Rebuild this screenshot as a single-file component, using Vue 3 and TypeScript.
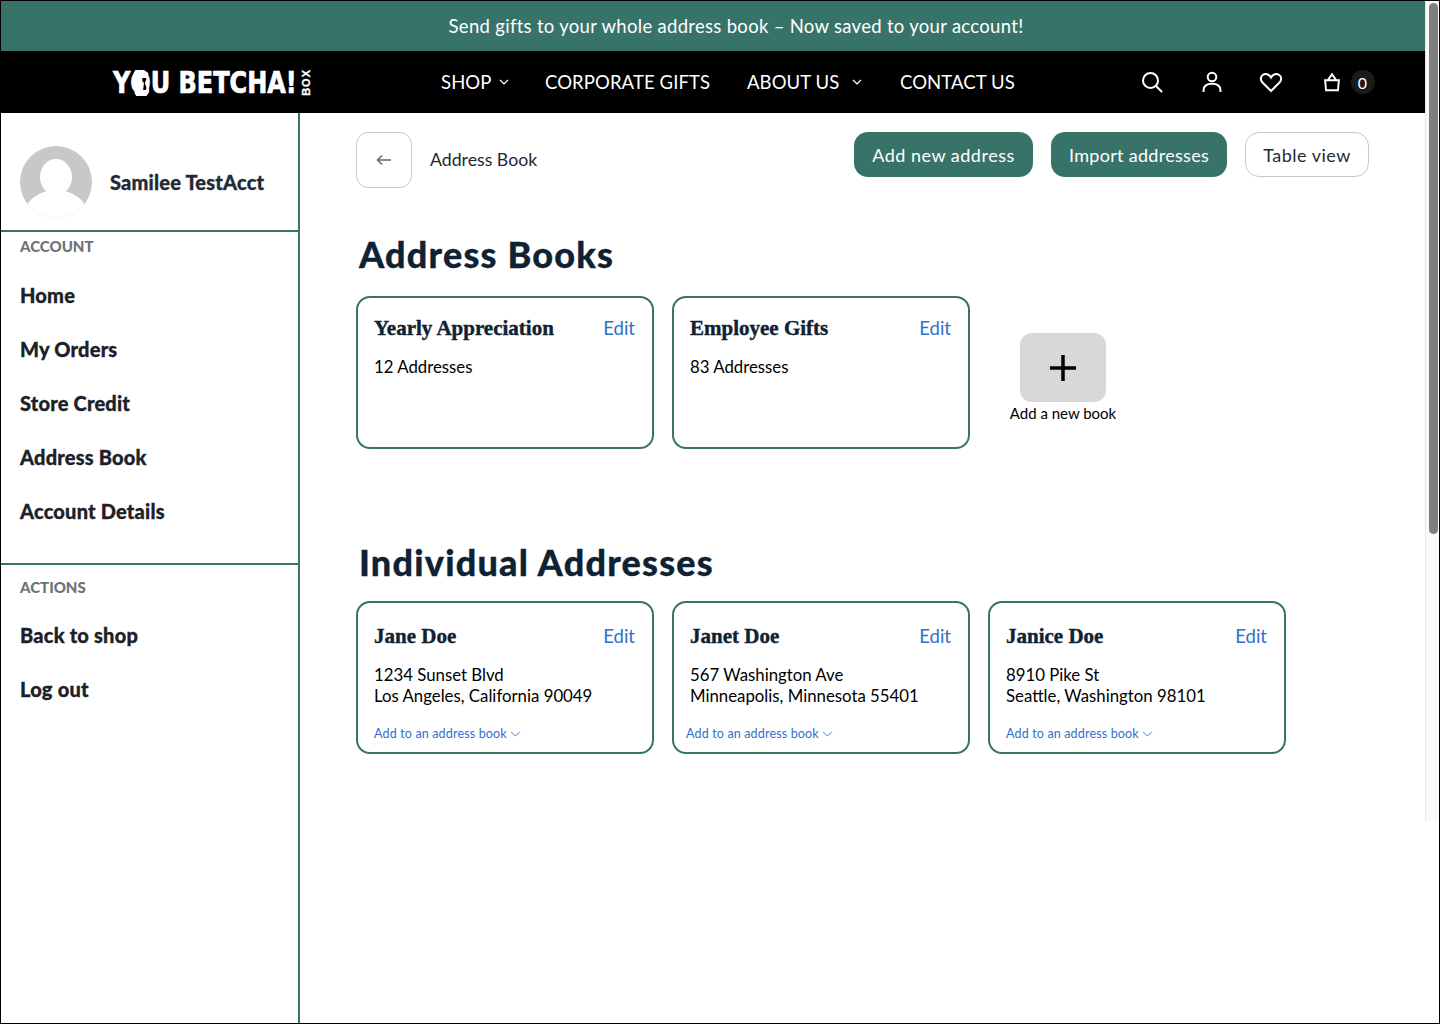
<script setup lang="ts">
interface BookCard { title: string; count: string }
interface AddressCard { name: string; street: string; city: string; linkClass?: string }

const accountLinks: string[] = ['Home', 'My Orders', 'Store Credit', 'Address Book', 'Account Details']
const actionLinks: string[] = ['Back to shop', 'Log out']
const books: BookCard[] = [
  { title: 'Yearly Appreciation', count: '12 Addresses' },
  { title: 'Employee Gifts', count: '83 Addresses' }
]
const addresses: AddressCard[] = [
  { name: 'Jane Doe', street: '1234 Sunset Blvd', city: 'Los Angeles, California 90049' },
  { name: 'Janet Doe', street: '567 Washington Ave', city: 'Minneapolis, Minnesota 55401', linkClass: 'shifted' },
  { name: 'Janice Doe', street: '8910 Pike St', city: 'Seattle, Washington 98101' }
]
</script>

<template>
  <div class="frame">
    <div class="page">
      <div class="banner">Send gifts to your whole address book – Now saved to your account!</div>
      <header class="header">
        <div class="logo">
          <span class="logo-text">Y<span class="logo-o">O<svg class="state" viewBox="0 0 20 26"><path d="M3 0h10l5 3v4l-1 5 2 5v5l-3 4H4l-2-3V14L1 8V3z" fill="#fff" /><path d="M11 8h4l1 1-2 4 2 5-1 2h-3l1-7-2-2z" fill="#000" /></svg></span>U BETCHA!</span>
          <span class="logo-box">BOX</span>
        </div>
        <nav class="nav">
          <a class="nav-link shop">SHOP
            <svg class="caret" viewBox="0 0 10 6"><path d="M1 1l4 4 4-4" /></svg>
          </a>
          <a class="nav-link corp">CORPORATE GIFTS</a>
          <a class="nav-link about">ABOUT US
            <svg class="caret wide" viewBox="0 0 10 6"><path d="M1 1l4 4 4-4" /></svg>
          </a>
          <a class="nav-link">CONTACT US</a>
        </nav>
        <div class="tools">
          <svg class="tool" viewBox="0 0 24 24"><circle cx="10.5" cy="10.5" r="7.5" /><path d="M16 16l6 6" /></svg>
          <svg class="tool" viewBox="0 0 24 24"><circle cx="12" cy="7" r="4.3" /><path d="M3.5 22v-1.5C3.5 16 7 13.8 12 13.8s8.500 2.200 8.500 6.700V22" /></svg>
          <svg class="tool" viewBox="0 0 24 24"><path d="M12 21L3.500 12.500C1 10 1.500 6.500 3.800 5 6.500 3.200 10 4 12 7.500 14 4 17.500 3.200 20.200 5 22.500 6.500 23 10 20.500 12.500z" /></svg>
          <div class="cart">
            <svg class="tool" viewBox="0 0 24 24"><path d="M4.500 10h15L18.500 21h-13zM3.500 10h17M7.500 10L12 3.500 16.500 10" /></svg>
            <span class="badge">0</span>
          </div>
        </div>
      </header>
      <div class="body">
        <aside class="sidebar">
          <div class="profile">
            <div class="avatar">
              <span class="avatar-head"></span>
              <span class="avatar-body"></span>
            </div>
            <span class="profile-name">Samilee TestAcct</span>
          </div>
          <section class="side-section first">
            <div class="side-label">ACCOUNT</div>
            <a v-for="link in accountLinks" :key="link" class="side-link">{{ link }}</a>
          </section>
          <section class="side-section second">
            <div class="side-label">ACTIONS</div>
            <a v-for="link in actionLinks" :key="link" class="side-link">{{ link }}</a>
          </section>
        </aside>
        <main class="main">
          <div class="toolbar">
            <button class="back" type="button" aria-label="Back">
              <svg viewBox="0 0 16 12" class="back-icon"><path d="M15 6H1.500M6 1.500L1.500 6 6 10.500" /></svg>
            </button>
            <span class="crumb">Address Book</span>
            <div class="actions">
              <button class="btn solid add" type="button">Add new address</button>
              <button class="btn solid import" type="button">Import addresses</button>
              <button class="btn outline" type="button">Table view</button>
            </div>
          </div>
          <h1 class="heading first-heading">Address Books</h1>
          <div class="cards">
            <article v-for="book in books" :key="book.title" class="card">
              <div class="card-top">
                <h2 class="card-title">{{ book.title }}</h2>
                <a class="edit">Edit</a>
              </div>
              <p class="card-text">{{ book.count }}</p>
            </article>
            <div class="new-book">
              <div class="new-tile">
                <svg viewBox="0 0 26 26" class="plus"><path d="M13 0v26M0 13h26" /></svg>
              </div>
              <span class="new-label">Add a new book</span>
            </div>
          </div>
          <h1 class="heading second-heading">Individual Addresses</h1>
          <div class="cards">
            <article v-for="item in addresses" :key="item.name" class="card person">
              <div class="card-top">
                <h2 class="card-title">{{ item.name }}</h2>
                <a class="edit">Edit</a>
              </div>
              <p class="card-text">{{ item.street }}<br />{{ item.city }}</p>
              <a class="add-link" :class="item.linkClass">Add to an address book
                <svg viewBox="0 0 12 7" class="add-caret"><path d="M1 1l5 5 5-5" /></svg>
              </a>
            </article>
          </div>
        </main>
      </div>
    </div>
    <div class="scroll">
      <div class="thumb"></div>
    </div>
  </div>
</template>

<style>
html, body { margin: 0; padding: 0; background: #fff; overflow: hidden; }
</style>

<style scoped>
.frame {
  width: 1440px;
  height: 1024px;
  box-sizing: border-box;
  border: 1px solid #000;
  display: flex;
  overflow: hidden;
  background: #fff;
  font-family: Lato, "Liberation Sans", sans-serif;
  color: #000;
}
.page { width: 1424px; display: flex; flex-direction: column; flex: none; }
.scroll {
  width: 14px;
  height: 820px;
  box-sizing: border-box;
  background: #fafafa;
  border-left: 1px solid #e6e6e6;
  padding: 2px 1px 0 3px;
}
.thumb { height: 531px; background: #7f7f7f; border-radius: 5px; }

.banner {
  height: 50px;
  background: #38736a;
  color: #fff;
  display: flex;
  align-items: center;
  justify-content: center;
  padding-left: 46px;
  font-size: 18.5px;
  letter-spacing: 0.3px;
}
.header {
  height: 62px;
  background: #000;
  color: #fff;
  display: flex;
  align-items: center;
  padding-left: 112px;
}
.logo { width: 201px; display: flex; align-items: center; flex: none; }
.logo-text {
  display: inline-block;
  font-family: "DejaVu Sans", sans-serif;
  font-stretch: condensed;
  font-weight: 700;
  font-size: 31px;
  line-height: 33px;
  white-space: nowrap;
  transform: scaleX(0.86);
  transform-origin: left center;
  width: 187px;
  -webkit-text-stroke: 0.7px #fff;
}
.logo-o { position: relative; display: inline-block; }
.state { position: absolute; left: 3px; top: 4px; width: 20px; height: 26px; }
.logo-box {
  writing-mode: vertical-rl;
  transform: rotate(180deg);
  font-family: "Liberation Sans", sans-serif;
  font-weight: 700;
  font-size: 11px;
  line-height: 12px;
  letter-spacing: 1px;
  -webkit-text-stroke: 0.3px #fff;
}
.nav { display: flex; align-items: center; margin-left: 127px; width: 640px; flex: none; }
.nav-link {
  display: inline-flex;
  align-items: center;
  font-size: 18.5px;
  letter-spacing: 0.1px;
  white-space: nowrap;
}
.shop { width: 104px; }
.corp { width: 202px; }
.about { width: 153px; }
.caret { width: 10px; height: 6px; margin-left: 8px; fill: none; stroke: #fff; stroke-width: 1.2; }
.caret.wide { margin-left: 13px; }
.tools { display: flex; align-items: center; margin-left: 59px; }
.tool {
  width: 24px;
  height: 24px;
  margin-right: 35.5px;
  fill: none;
  stroke: #fff;
  stroke-width: 2;
  flex: none;
}
.cart { display: flex; align-items: center; margin-left: 2px; }
.cart .tool { width: 22px; height: 22px; margin-right: 8px; stroke-width: 2.1; }
.badge {
  width: 24px;
  height: 24px;
  border-radius: 50%;
  background: #1a1a1a;
  display: flex;
  align-items: center;
  justify-content: center;
  font-size: 16px;
}

.body { flex: 1; display: flex; min-height: 0; }
.sidebar {
  width: 299px;
  flex: none;
  box-sizing: border-box;
  border-right: 2px solid #38736a;
}
.profile {
  height: 119px;
  box-sizing: border-box;
  border-bottom: 2px solid #38736a;
  padding: 33px 0 0 19px;
  display: flex;
  align-items: flex-start;
}
.avatar {
  position: relative;
  width: 72px;
  height: 72px;
  border-radius: 50%;
  background: #c8c8c8;
  overflow: hidden;
  flex: none;
}
.avatar-head {
  position: absolute;
  left: 20px;
  top: 13px;
  width: 32px;
  height: 36px;
  border-radius: 50%;
  background: #fff;
}
.avatar-body {
  position: absolute;
  left: 4px;
  top: 44px;
  width: 64px;
  height: 52px;
  border-radius: 50%;
  background: #fff;
}
.profile-name {
  margin: 24px 0 0 18px;
  font-size: 20px;
  line-height: 24px;
  font-weight: 900;
  letter-spacing: 0.2px;
  color: #1f2a37;
  white-space: nowrap;
  -webkit-text-stroke: 0.3px #1f2a37;
}
.side-section { padding-left: 19px; display: flex; flex-direction: column; }
.side-section.first { height: 333px; border-bottom: 2px solid #38736a; box-sizing: border-box; }
.side-section.second { padding-top: 8px; }
.side-label {
  height: 28px;
  line-height: 28px;
  font-size: 15px;
  font-weight: 900;
  color: #6d7278;
  margin-bottom: 7px;
}
.side-section.first .side-label { margin-bottom: 8px; }
.side-link {
  height: 54px;
  flex: none;
  display: flex;
  align-items: center;
  font-size: 20px;
  font-weight: 900;
  letter-spacing: 0.2px;
  color: #1c2127;
  -webkit-text-stroke: 0.3px #1c2127;
}

.main { flex: 1; padding: 19px 0 0 56px; min-width: 0; }
.toolbar { display: flex; align-items: flex-start; width: 1013px; }
.back {
  width: 56px;
  height: 56px;
  box-sizing: border-box;
  border: 1px solid #c5c8cc;
  border-radius: 12px;
  background: #fff;
  padding: 0;
  display: flex;
  align-items: center;
  justify-content: center;
}
.back-icon { width: 16px; height: 12px; fill: none; stroke: #666; stroke-width: 1.5; }
.crumb { margin-left: 18px; line-height: 56px; font-size: 17.7px; color: #1c2a36; }
.actions { margin-left: auto; display: flex; gap: 18px; }
.btn {
  height: 45px;
  box-sizing: border-box;
  border-radius: 14px;
  font-family: inherit;
  font-size: 18px;
  letter-spacing: 0.5px;
  padding: 0;
  white-space: nowrap;
}
.solid { background: #38736a; color: #fff; border: 0; }
.add { width: 179px; }
.import { width: 176px; letter-spacing: 0.3px; }
.outline { width: 124px; background: #fff; border: 1px solid #c5c8cc; color: #1f2a37; }

.heading {
  margin: 0;
  padding-left: 3px;
  font-size: 36px;
  line-height: 44px;
  font-weight: 900;
  color: #0f2233;
  letter-spacing: 1.2px;
  -webkit-text-stroke: 0.3px #0f2233;
}
.first-heading { margin-top: 44px; margin-bottom: 20px; }
.second-heading { margin-top: 91px; margin-bottom: 17px; }
.cards { display: flex; gap: 18px; }
.card {
  width: 298px;
  height: 153px;
  box-sizing: border-box;
  border: 2px solid #38736a;
  border-radius: 14px;
  padding: 17px 17px 0 16px;
  display: flex;
  flex-direction: column;
  flex: none;
}
.card.person { padding-top: 20px; }
.card-top { display: flex; justify-content: space-between; align-items: center; height: 28px; }
.card-title {
  margin: 0 0 2px;
  font-family: "Liberation Serif", serif;
  font-weight: 700;
  font-size: 21px;
  line-height: 28px;
  color: #0f2233;
  -webkit-text-stroke: 0.4px #0f2233;
}
.edit { font-size: 18.5px; color: #2f6fd0; margin-bottom: 2px; }
.card-text { margin: 13px 0 0; font-size: 16.8px; line-height: 21px; color: #000; }
.add-link {
  margin: auto 0 10px 0;
  display: inline-flex;
  align-items: center;
  font-size: 12.5px;
  line-height: 16px;
  letter-spacing: 0.16px;
  color: #2f6fd0;
}
.add-link.shifted { margin-left: -4px; }
.add-caret { width: 11px; height: 6px; margin-left: 3px; fill: none; stroke: #2f6fd0; stroke-width: 1.1; }
.new-book {
  width: 148px;
  margin-left: 1px;
  padding-top: 37px;
  display: flex;
  flex-direction: column;
  align-items: center;
}
.new-tile {
  width: 86px;
  height: 69px;
  border-radius: 12px;
  background: #d8d8d8;
  display: flex;
  align-items: center;
  justify-content: center;
}
.plus { width: 26px; height: 26px; fill: none; stroke: #000; stroke-width: 3.5; }
.new-label { margin-top: 1px; font-size: 15px; line-height: 20px; white-space: nowrap; }
</style>
